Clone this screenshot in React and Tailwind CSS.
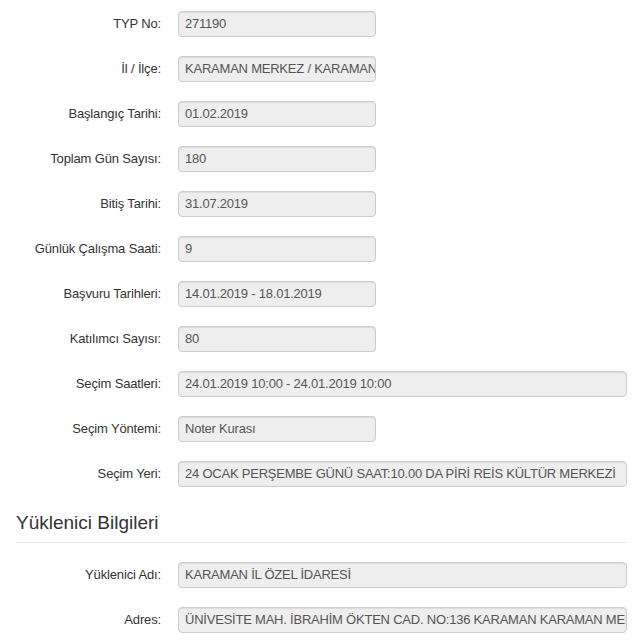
import React from "react";

const rows = [
  { label: "TYP No:", value: "271190" },
  { label: "İl / İlçe:", value: "KARAMAN MERKEZ / KARAMAN MERKEZ" },
  { label: "Başlangıç Tarihi:", value: "01.02.2019" },
  { label: "Toplam Gün Sayısı:", value: "180" },
  { label: "Bitiş Tarihi:", value: "31.07.2019" },
  { label: "Günlük Çalışma Saati:", value: "9" },
  { label: "Başvuru Tarihleri:", value: "14.01.2019 - 18.01.2019" },
  { label: "Katılımcı Sayısı:", value: "80" },
  { label: "Seçim Saatleri:", value: "24.01.2019 10:00 - 24.01.2019 10:00", wide: true },
  { label: "Seçim Yöntemi:", value: "Noter Kurası" },
  {
    label: "Seçim Yeri:",
    value: "24 OCAK PERŞEMBE GÜNÜ SAAT:10.00 DA PİRİ REİS KÜLTÜR MERKEZİ",
    wide: true,
  },
];

const contractor = [
  { label: "Yüklenici Adı:", value: "KARAMAN İL ÖZEL İDARESİ", wide: true },
  {
    label: "Adres:",
    value: "ÜNİVESİTE MAH. İBRAHİM ÖKTEN CAD. NO:136 KARAMAN KARAMAN MERKEZ",
    wide: true,
  },
];

// ------- one label + readonly field ------- //
const Field = ({ label, value, wide }) => (
  <div className="flex items-center mb-[19px]">
    <label className="w-[145px] shrink-0 text-right text-[13px] tracking-[-0.15px] text-[#333]">
      {label}
    </label>
    <div
      className={`ml-[17px] h-[26px] shrink-0 ${
        wide ? "w-[449px]" : "w-[198px]"
      } overflow-hidden whitespace-nowrap rounded-[4px] border border-[#ccc] bg-[#eee] px-[6px] text-[13px] leading-[24px] tracking-[-0.22px] text-[#555] shadow-[inset_0_1px_1px_rgba(0,0,0,0.075)]`}
    >
      {value}
    </div>
  </div>
);

export default function App() {
  return (
    <div
      className="min-h-screen bg-white pl-4 pr-[6px] pt-[11px]"
      style={{ fontFamily: '"Liberation Sans", Arial, sans-serif' }}
    >
      {rows.map((r) => (
        <Field key={r.label} {...r} />
      ))}

      {/* Contractor section */}
      <h4 className="mt-[26px] border-b border-[#e5e5e5] pb-[9px] text-[19px] leading-[20px] text-[#333]">
        Yüklenici Bilgileri
      </h4>
      <div className="mt-[19px]">
        {contractor.map((r) => (
          <Field key={r.label} {...r} />
        ))}
      </div>
    </div>
  );
}
